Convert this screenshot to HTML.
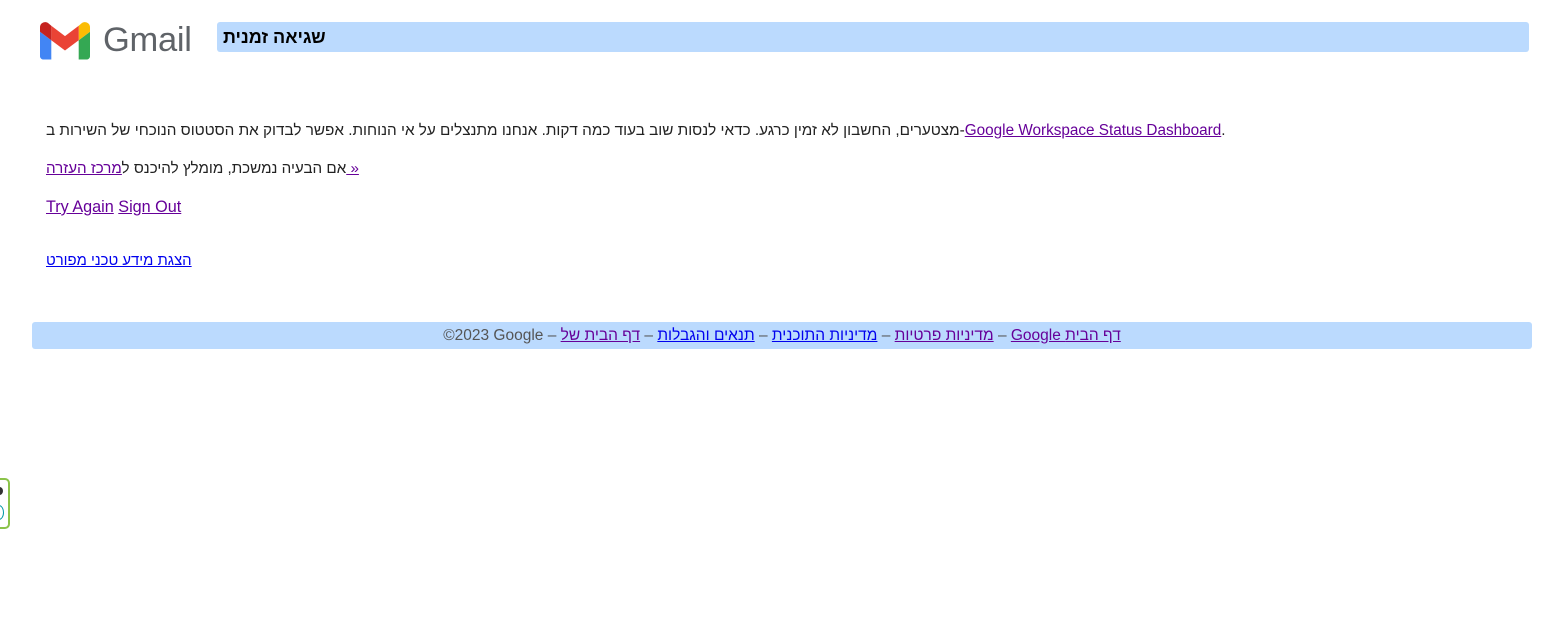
<!DOCTYPE html>
<html><head><meta charset="utf-8"><style>
body{margin:0;width:1557px;height:643px;background:#fff;font-family:"Liberation Sans",Arial,sans-serif;position:relative;overflow:hidden}
a{text-decoration:underline}
.v{color:#660099}.b{color:#0000ee}
.p{position:absolute;left:46px;font-size:16px;color:#222;white-space:nowrap;direction:ltr}
</style></head><body>
<svg style="position:absolute;left:40px;top:22px" width="50" height="38" viewBox="0 0 50 38">
<path d="M3.4 37.5h7.9V18.2L0 9.7v24.4c0 1.9 1.5 3.4 3.4 3.4z" fill="#4285f4"/>
<path d="M38.7 37.5h7.9c1.9 0 3.4-1.5 3.4-3.4V9.7l-11.3 8.5z" fill="#34a853"/>
<path d="M38.7 3.8v14.4L50 9.7V5.2c0-4.2-4.8-6.6-8.2-4.1z" fill="#fbbc04"/>
<path d="M11.3 18.2V3.8L25 14.1 38.7 3.8v14.4L25 28.5z" fill="#ea4335"/>
<path d="M0 5.2v4.5l11.3 8.5V3.8L8.2 1.1C4.8-1.4 0 1 0 5.2z" fill="#c5221f"/>
</svg>
<div style="position:absolute;left:103px;top:21px;font-size:34.5px;color:#5f6368;letter-spacing:-0.3px">Gmail</div>
<div style="position:absolute;left:217px;top:22px;width:1312px;height:30px;background:#bbdafe;border-radius:3px"></div>
<div style="position:absolute;left:223px;top:27px;font-size:18px;font-weight:bold;color:#000" dir="rtl">שגיאה זמנית</div>
<div class="p" style="top:122px;font-size:15.3px">מצטערים, החשבון לא זמין כרגע. כדאי לנסות שוב בעוד כמה דקות. אנחנו מתנצלים על אי הנוחות. אפשר לבדוק את הסטטוס הנוכחי של השירות ב-<a class="v">Google Workspace Status Dashboard</a>.</div>
<div class="p" style="top:160px;font-size:15.2px">אם הבעיה נמשכת, מומלץ להיכנס ל<a class="v">מרכז העזרה »</a></div>
<div class="p" style="top:198px;font-size:16.2px"><a class="v">Try Again</a> <a class="v">Sign Out</a></div>
<div class="p" style="top:253px;font-size:14.9px"><a class="b" dir="rtl">הצגת מידע טכני מפורט</a></div>
<div style="position:absolute;left:32px;top:322px;width:1500px;height:27px;background:#bbdafe;border-radius:3px"></div>
<div style="position:absolute;left:32px;width:1500px;top:327px;text-align:center;font-size:15.5px;color:#555;white-space:nowrap;direction:ltr">
<span>©2023 Google</span> – <a class="v" style="unicode-bidi:isolate" dir="rtl">דף הבית של</a> – <a class="b" style="unicode-bidi:isolate" dir="rtl">תנאים והגבלות</a> – <a class="b" style="unicode-bidi:isolate" dir="rtl">מדיניות התוכנית</a> – <a class="v" style="unicode-bidi:isolate" dir="rtl">מדיניות פרטיות</a> – <a class="v" style="unicode-bidi:isolate" dir="ltr">Google <span dir="rtl" style="unicode-bidi:isolate">דף הבית</span></a>
</div>
<div style="position:absolute;left:-14px;top:478px;width:20px;height:47px;border:2px solid #8bc34a;border-radius:5px;background:#fff"></div>
<div style="position:absolute;left:-4px;top:487px;width:7px;height:8px;border-radius:50%;background:#333"></div>
<div style="position:absolute;left:-6px;top:505px;width:8px;height:13px;border:1px solid #0097a7;border-radius:50%"></div>
</body></html>
